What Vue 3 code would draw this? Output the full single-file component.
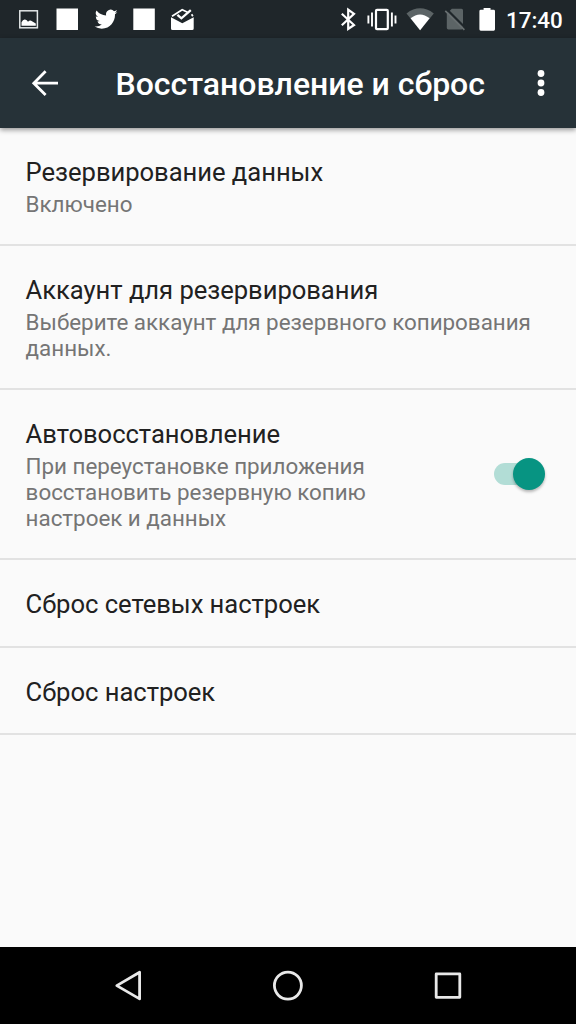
<script setup>
const rows = [
  { title: 'Резервирование данных', lines: ['Включено'], size: 'one' },
  { title: 'Аккаунт для резервирования', lines: ['Выберите аккаунт для резервного копирования', 'данных.'], size: 'two' },
  { title: 'Автовосстановление', lines: ['При переустановке приложения', 'восстановить резервную копию', 'настроек и данных'], size: 'three', toggle: true },
  { title: 'Сброс сетевых настроек', lines: [], size: 'plain' },
  { title: 'Сброс настроек', lines: [], size: 'plain' },
]
</script>

<template>
  <div class="screen">
    <div class="status">
      <svg class="status-left" width="200" height="38" viewBox="0 0 200 38">
        <rect x="19.8" y="10.8" width="17.6" height="17" fill="none" stroke="#e3e7e8" stroke-width="1.5" />
        <path d="M21.5 25.8V22.2Q23 19.2 25 19.6Q27 20 28 21.8Q30 19.6 32 21.2L35.8 23.4V25.8Z" fill="#fff" />
        <rect x="56.5" y="8.5" width="21.5" height="21.5" fill="#fff" />
        <g transform="translate(94 6.8) scale(1 1.03)">
          <path fill="#fff" d="M23.643 4.937c-.835.37-1.732.62-2.675.733a4.67 4.67 0 0 0 2.048-2.578 9.3 9.3 0 0 1-2.958 1.13 4.66 4.66 0 0 0-7.938 4.25A13.229 13.229 0 0 1 2.51 3.604a4.66 4.66 0 0 0 1.442 6.22 4.647 4.647 0 0 1-2.11-.583v.06a4.66 4.66 0 0 0 3.737 4.568 4.692 4.692 0 0 1-2.104.08 4.661 4.661 0 0 0 4.352 3.234A9.348 9.348 0 0 1 .6 19.11a13.175 13.175 0 0 0 7.14 2.093c8.57 0 13.255-7.098 13.255-13.254 0-.2-.005-.402-.014-.602a9.47 9.47 0 0 0 2.323-2.41z" />
        </g>
        <rect x="133.3" y="8.5" width="21.5" height="21.5" fill="#fff" />
        <path d="M171 17.2L182.3 23.2L193.7 17.2V28.5Q193.7 30 192.2 30H172.5Q171 30 171 28.5Z" fill="#fff" />
        <path d="M172 16.2L182.2 9.8L187.5 12.2M191.6 14.2L192.8 16.2" fill="none" stroke="#fff" stroke-width="1.7" />
        <path d="M177.4 14.8L181.4 18.3L190.8 10.2" fill="none" stroke="#fff" stroke-width="2.3" />
      </svg>
      <div class="status-right">
        <svg width="170" height="38" viewBox="332 0 170 38">
          <path d="M341.8 13.7L354 25L348.2 29V9.7L354 13.9L341.8 25.3" fill="none" stroke="#fff" stroke-width="2.2" />
          <rect x="376" y="9.8" width="11.8" height="19.4" rx="1" fill="none" stroke="#fff" stroke-width="2.2" />
          <path d="M372 12.5V26.5M368.4 15.5V23.5M391.9 12.5V26.5M395.5 15.5V23.5" stroke="#fff" stroke-width="1.9" />
          <path d="M406.5 13.4Q420 3.2 433.8 13.4L420.1 30.3Z" fill="#5c6466" />
          <path d="M410.6 18.2Q420 10.6 429.6 18.2L420.1 30.3Z" fill="#fff" />
          <path d="M451.8 8.8H461.5Q463 8.8 463 10.3V28Q463 29.4 461.5 29.4H448.3Q446.8 29.4 446.8 28V13.8Z" fill="#5c6466" />
          <path d="M447 9.6L466 28.6" stroke="#1f262a" stroke-width="2.2" />
          <path d="M445.3 10.8L464.4 29.9" stroke="#686f71" stroke-width="1.7" />
          <path d="M483.6 8H490.5V9.8H493.7Q495 9.8 495 11.2V29.3Q495 30.7 493.7 30.7H480.8Q479.4 30.7 479.4 29.3V11.2Q479.4 9.8 480.8 9.8H483.6Z" fill="#fff" />
        </svg>
        <span class="clock">17:40</span>
      </div>
    </div>

    <header class="bar">
      <svg class="back" width="28" height="28" viewBox="31 69 28 28">
        <path d="M58 83.2H34M45.6 71.3L33.8 83.2L45.6 95" fill="none" stroke="#fff" stroke-width="2.8" />
      </svg>
      <h1>Восстановление и сброс</h1>
      <svg class="more" width="8" height="30" viewBox="0 0 8 30">
        <circle cx="4" cy="5.5" r="3.4" fill="#fff" /><circle cx="4" cy="15" r="3.4" fill="#fff" /><circle cx="4" cy="24.5" r="3.4" fill="#fff" />
      </svg>
    </header>

    <main>
      <section v-for="row in rows" :key="row.title" class="row" :class="row.size">
        <div>
          <div class="title">{{ row.title }}</div>
          <div v-for="line in row.lines" :key="line" class="line">{{ line }}</div>
        </div>
        <div v-if="row.toggle" class="switch"><i></i></div>
      </section>
    </main>

    <nav>
      <svg width="576" height="77" viewBox="0 947 576 77" fill="none" stroke="#e8e8e8" stroke-width="2.8" stroke-linejoin="round">
        <path d="M139.6 972.3V998.9L116.8 985.6Z" />
        <circle cx="287.9" cy="985.6" r="13.5" />
        <rect x="436.2" y="973.9" width="23.6" height="23.4" />
      </svg>
    </nav>
  </div>
</template>

<style>
body { margin: 0; background: #fafafa; }
</style>

<style scoped>
.screen { width: 576px; height: 1024px; display: flex; flex-direction: column; overflow: hidden; background: #fafafa; font-family: Roboto, sans-serif; }
svg { display: block; }
.status { height: 38px; flex: none; background: #1f262a; display: flex; justify-content: space-between; }
.status-right { display: flex; width: 244px; }
.status-right svg { flex: none; }
.clock { color: #fff; font-size: 22.4px; font-weight: 500; line-height: 40px; margin-left: 4px; }
.bar { height: 90px; flex: none; box-sizing: border-box; background: #263238; display: flex; align-items: center; padding: 0 31px; box-shadow: 0 2px 5px rgba(0, 0, 0, .4); z-index: 1; }
h1 { margin: 1px 0 0 56.5px; font-size: 32px; font-weight: 500; line-height: 38px; letter-spacing: -.02px; color: #fff; white-space: nowrap; }
.more { margin-left: auto; }
main { flex: 1; }
.row { box-sizing: border-box; border-bottom: 2px solid #e2e2e2; padding: 29px 31px 0 25.6px; display: flex; justify-content: space-between; white-space: nowrap; }
.one { height: 118px; }
.two { height: 144px; }
.three { height: 170px; }
.plain { height: 87.5px; }
.title { font-size: 25.6px; line-height: 30px; letter-spacing: -.04px; color: #212121; margin-bottom: 4px; }
.line { font-size: 22.4px; line-height: 26px; letter-spacing: -.02px; color: #757575; }
.switch { position: relative; width: 51px; height: 32px; margin-top: 39px; display: flex; justify-content: flex-end; align-items: center; }
.switch::before { content: ""; position: absolute; left: 0; top: 5px; width: 42px; height: 22px; border-radius: 11px; background: #b2ddd6; }
.switch i { position: relative; width: 32px; height: 32px; border-radius: 50%; background: #079482; box-shadow: 0 2px 3px rgba(0, 0, 0, .28); }
nav { height: 77px; flex: none; background: #000; }
</style>
